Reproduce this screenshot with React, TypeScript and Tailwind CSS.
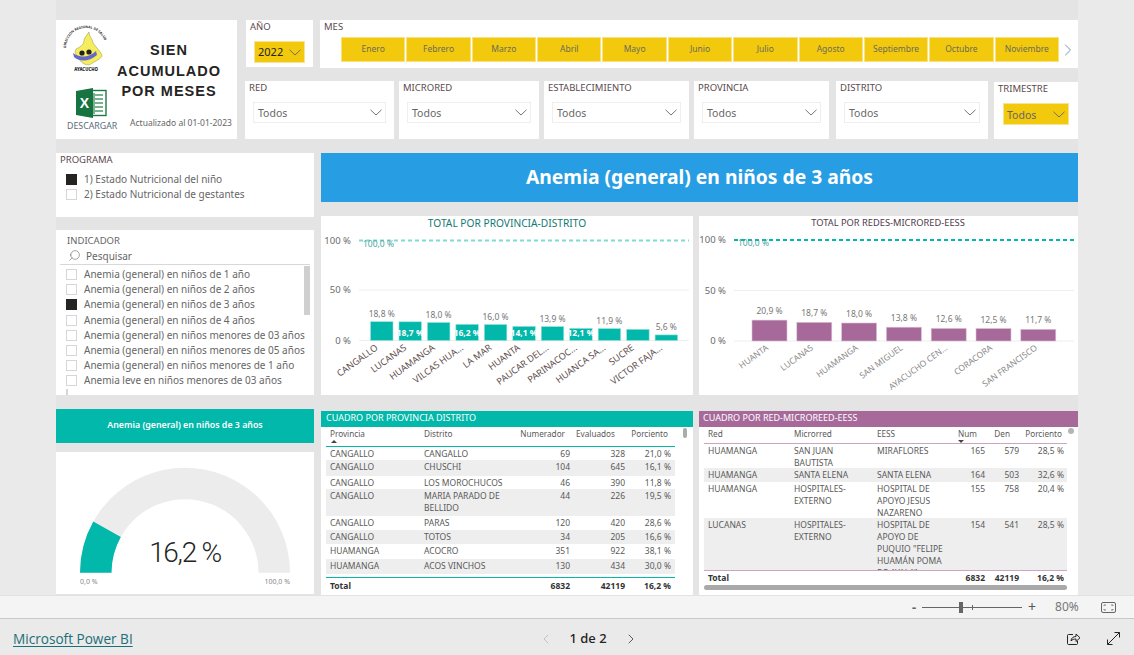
import { ChevronLeft, ChevronRight, Search } from 'lucide-react';

const MONTHS = ['Enero', 'Febrero', 'Marzo', 'Abril', 'Mayo', 'Junio', 'Julio', 'Agosto', 'Septiembre', 'Octubre', 'Noviembre'];

const INDICATORS = [
  'Anemia (general) en niños de 1 año',
  'Anemia (general) en niños de 2 años',
  'Anemia (general) en niños de 3 años',
  'Anemia (general) en niños de 4 años',
  'Anemia (general) en niños menores de 03 años',
  'Anemia (general) en niños menores de 05 años',
  'Anemia (general) en niños menores de 1 año',
  'Anemia leve en niños menores de 03 años',
];

const PROVINCE_BARS = [
  { name: 'CANGALLO', value: 18.8, label: '18,8 %', inside: false },
  { name: 'LUCANAS', value: 18.7, label: '18,7 %', inside: true },
  { name: 'HUAMANGA', value: 18.0, label: '18,0 %', inside: false },
  { name: 'VILCAS HUA...', value: 16.2, label: '16,2 %', inside: true },
  { name: 'LA MAR', value: 16.0, label: '16,0 %', inside: false },
  { name: 'HUANTA', value: 14.1, label: '14,1 %', inside: true },
  { name: 'PAUCAR DEL...', value: 13.9, label: '13,9 %', inside: false },
  { name: 'PARINACOC...', value: 12.1, label: '12,1 %', inside: true },
  { name: 'HUANCA SA...', value: 11.9, label: '11,9 %', inside: false },
  { name: 'SUCRE', value: 11.2, label: '', inside: false },
  { name: 'VICTOR FAJA...', value: 5.6, label: '5,6 %', inside: false },
];

const RED_BARS = [
  { name: 'HUANTA', value: 20.9, label: '20,9 %' },
  { name: 'LUCANAS', value: 18.7, label: '18,7 %' },
  { name: 'HUAMANGA', value: 18.0, label: '18,0 %' },
  { name: 'SAN MIGUEL', value: 13.8, label: '13,8 %' },
  { name: 'AYACUCHO CEN...', value: 12.6, label: '12,6 %' },
  { name: 'CORACORA', value: 12.5, label: '12,5 %' },
  { name: 'SAN FRANCISCO', value: 11.7, label: '11,7 %' },
];

const PROVINCE_ROWS = [
  { h: 'h-[13px]', p: 'CANGALLO', d: 'CANGALLO', n: '69', e: '328', r: '21,0 %' },
  { h: 'h-[16px]', p: 'CANGALLO', d: 'CHUSCHI', n: '104', e: '645', r: '16,1 %' },
  { h: 'h-[13px]', p: 'CANGALLO', d: 'LOS MOROCHUCOS', n: '46', e: '390', r: '11,8 %' },
  { h: 'h-[27px]', p: 'CANGALLO', d: 'MARIA PARADO DE BELLIDO', n: '44', e: '226', r: '19,5 %' },
  { h: 'h-[14px]', p: 'CANGALLO', d: 'PARAS', n: '120', e: '420', r: '28,6 %' },
  { h: 'h-[14px]', p: 'CANGALLO', d: 'TOTOS', n: '34', e: '205', r: '16,6 %' },
  { h: 'h-[15px]', p: 'HUAMANGA', d: 'ACOCRO', n: '351', e: '922', r: '38,1 %' },
  { h: 'h-[15px]', p: 'HUAMANGA', d: 'ACOS VINCHOS', n: '130', e: '434', r: '30,0 %' },
];

const RED_ROWS = [
  { h: 'h-[24px]', r: 'HUAMANGA', m: 'SAN JUAN BAUTISTA', s: 'MIRAFLORES', n: '165', d: '579', p: '28,5 %' },
  { h: 'h-[14px]', r: 'HUAMANGA', m: 'SANTA ELENA', s: 'SANTA ELENA', n: '164', d: '503', p: '32,6 %' },
  { h: 'h-[36px]', r: 'HUAMANGA', m: 'HOSPITALES-EXTERNO', s: 'HOSPITAL DE APOYO JESUS NAZARENO', n: '155', d: '758', p: '20,4 %' },
  { h: 'h-[52px]', r: 'LUCANAS', m: 'HOSPITALES-EXTERNO', s: 'HOSPITAL DE APOYO DE PUQUIO "FELIPE HUAMÁN POMA DE AYALA"', n: '154', d: '541', p: '28,5 %' },
];

function Chevron({ className }: { className?: string }) {
  return (
    <svg width="12" height="7" viewBox="0 0 12 7" className={className} fill="none" stroke="#666" strokeWidth="0.9">
      <polyline points="0.5,0.8 6,6 11.5,0.8" />
    </svg>
  );
}

function DropSlicer({ label, className }: { label: string; className: string }) {
  return (
    <div className={`bg-white h-[58px] px-[4px] ${className}`}>
      <div className="h-[21px] pt-[1px] text-[9.5px] leading-[12px] text-[#5b4a4f]">{label}</div>
      <div className="mx-[4px] h-[21px] border border-[#eeeeee] flex items-center justify-between pl-[4px] pr-[3px] text-[10.5px] text-[#666]">
        <span className="pt-[3px]">Todos</span>
        <Chevron />
      </div>
    </div>
  );
}

function CheckBox({ checked }: { checked?: boolean }) {
  return <span className={`w-[11px] h-[11px] shrink-0 border ${checked ? 'bg-[#252423] border-[#252423]' : 'border-[#d6d6d6] bg-white'}`} />;
}

function Logo() {
  return (
    <svg width="44" height="48" viewBox="0 0 44 48" className="block overflow-visible">
      <defs>
        <path id="arc" d="M1 21 A20 20 0 0 1 41 21" />
      </defs>
      <text fontSize="3.4" fontWeight="700" fill="#2f2f2f">
        <textPath href="#arc">DIRECCION REGIONAL DE SALUD</textPath>
      </text>
      <path d="M24 5 C24 10 28 12 28 16 C31 20 35 24 37 28 C37 32 30 34 26 37 C22 39 17 37 14 32 C11 28 9 25 11 22 C15 20 19 18 19 13 C20 10 22 8 24 5 Z" fill="#f6ed5e" stroke="#77773a" strokeWidth="0.4" />
      <path d="M8 26 C14 31 24 31 31 24 L32 28 C24 35 14 35 9 30 Z" fill="#6468c8" />
      <circle cx="17" cy="26" r="2.6" fill="#222" />
      <circle cx="24" cy="25" r="2.6" fill="#222" />
      <text x="21" y="43.500" textAnchor="middle" fontSize="4.3" fontWeight="800" fill="#222">AYACUCHO</text>
    </svg>
  );
}

function ExcelIcon() {
  return (
    <svg width="31" height="30" viewBox="0 0 31 30" className="block">
      <rect x="10" y="2.5" width="20" height="25" fill="#fff" stroke="#1d7a45" strokeWidth="1.4" />
      <path d="M19 7h8M19 11h8M19 15h8M19 19h8M19 23h8M18 5v21" stroke="#4c9a6c" strokeWidth="1.5" fill="none" />
      <path d="M0 3 L17 0 V30 L0 27 Z" fill="#17733f" />
      <text x="8.5" y="20" textAnchor="middle" fontSize="14" fontWeight="700" fill="#fff" fontFamily="Liberation Sans, sans-serif">X</text>
    </svg>
  );
}

function ChartAxis({ x1, x2, y100, y50, y0, labelX, dash, dashWidth, refX }: { x1: number; x2: number; y100: number; y50: number; y0: number; labelX: number; dash: string; dashWidth: number; refX: number }) {
  return (
    <g fontSize="9.5" fill="#6b6b6b">
      <text x={labelX} y={y100 + 3} textAnchor="end">100 %</text>
      <text x={labelX} y={y50 + 3} textAnchor="end">50 %</text>
      <text x={labelX} y={y0 + 3} textAnchor="end">0 %</text>
      <line x1={x1} x2={x2} y1={y50} y2={y50} stroke="#eeeeee" />
      <line x1={x1} x2={x2} y1={y0} y2={y0} stroke="#eeeeee" />
      <line x1={x1} x2={x2} y1={y100} y2={y100} stroke={dash} strokeWidth={dashWidth} strokeDasharray="4 3" />
      <text x={refX} y={y100 + 6} fontSize="8.5" fill="#4aa79f">100,0 %</text>
    </g>
  );
}

function ProvinceChart() {
  const base = 340.5;
  return (
    <svg viewBox="321 216 372 179" className="block w-full h-full">
      <text x="507" y="227" textAnchor="middle" fontSize="10.2" fill="#117a74">TOTAL POR PROVINCIA-DISTRITO</text>
      <ChartAxis x1={359} x2={689} y100={240.5} y50={290} y0={base} labelX={351} dash="#7fdccf" dashWidth={2} refX={363} />
      {PROVINCE_BARS.map((b, i) => {
        const x = 370.5 + i * 28.46;
        const top = base - b.value;
        return (
          <g key={b.name}>
            <rect x={x} y={top} width="22.5" height={b.value} fill="#01b8aa" stroke="#99e3dd" strokeWidth="0.6" />
            {b.label && !b.inside && <text x={x + 11.2} y={top - 4.5} textAnchor="middle" fontSize="8.5" fill="#777">{b.label}</text>}
            {b.inside && <text x={x + 11.2} y="336" textAnchor="middle" fontSize="8.5" fontWeight="700" fill="#fff">{b.label}</text>}
            <text transform={`translate(${x + 8} 349) rotate(-36)`} textAnchor="end" fontSize="9.2" fill="#5f4f4f">{b.name}</text>
          </g>
        );
      })}
    </svg>
  );
}

function RedChart() {
  const base = 341;
  return (
    <svg viewBox="699 216 379 179" className="block w-full h-full">
      <text x="888" y="226" textAnchor="middle" fontSize="9.3" fill="#4f3a4c">TOTAL POR REDES-MICRORED-EESS</text>
      <ChartAxis x1={734} x2={1074} y100={240} y50={290.5} y0={base} labelX={726} dash="#01b8aa" dashWidth={2.2} refX={738} />
      {RED_BARS.map((b, i) => {
        const x = 752 + i * 44.8;
        const top = base - b.value;
        return (
          <g key={b.name}>
            <rect x={x} y={top} width="35" height={b.value} fill="#a66999" stroke="#dcc3d6" strokeWidth="0.6" />
            <text x={x + 17.5} y={top - 6} textAnchor="middle" fontSize="8.5" fill="#777">{b.label}</text>
            <text transform={`translate(${x + 17} 349) rotate(-36)`} textAnchor="end" fontSize="8.5" fill="#8a8a8a">{b.name}</text>
          </g>
        );
      })}
    </svg>
  );
}

function Gauge() {
  const cx = 129;
  const cy = 120.7;
  const R = 105;
  const r = 73.5;
  const a = Math.PI * (1 - 0.162);
  const px = (rad: number, ang: number) => `${cx + rad * Math.cos(ang)} ${cy - rad * Math.sin(ang)}`;
  return (
    <svg viewBox="0 0 258 142" className="block w-full h-full">
      <path d={`M${px(R, Math.PI)} A${R} ${R} 0 0 1 ${px(R, 0)} L${px(r, 0)} A${r} ${r} 0 0 0 ${px(r, Math.PI)} Z`} fill="#ececec" />
      <path d={`M${px(R, Math.PI)} A${R} ${R} 0 0 1 ${px(R, a)} L${px(r, a)} A${r} ${r} 0 0 0 ${px(r, Math.PI)} Z`} fill="#01b8aa" />
      <text x={cx} y="110" textAnchor="middle" fontSize="28" fontWeight="300" letterSpacing="-1.300" fill="#252423" fontFamily="Roboto, sans-serif">16,2 %</text>
      <text x="24" y="132" fontSize="7" fill="#888">0,0 %</text>
      <text x="234" y="132" fontSize="7" fill="#888" textAnchor="end">100,0 %</text>
    </svg>
  );
}

function ProvinceTable() {
  const cols = 'grid grid-cols-[94px_96px_54px_55px_46px]';
  return (
    <div className="relative bg-white h-[184px] text-[8.5px] text-[#5a5a5a]">
      <div className="h-[16px] bg-[#01b8aa] text-white text-[9px] leading-[13px] pl-[5px]">CUADRO POR PROVINCIA DISTRITO</div>
      <div className="mx-[5px] w-[349px]">
        <div className={`${cols} h-[20px] border-b border-[#01b8aa] pt-[1px] leading-[12px] text-[8.2px]`}>
          <span className="pl-[4px] relative">Provincia<span className="absolute left-[5px] top-[12px] border-x-[3px] border-x-transparent border-b-[3px] border-b-[#444]" /></span>
          <span className="pl-[4px]">Distrito</span>
          <span className="text-right pr-[5px] whitespace-nowrap">Numerador</span>
          <span className="text-right pr-[10px]">Evaluados</span>
          <span className="text-right pr-[3px]">Porciento</span>
        </div>
        {PROVINCE_ROWS.map((row, i) => (
          <div key={row.d} className={`${cols} ${row.h} leading-[12px] overflow-hidden ${i % 2 ? 'bg-[#eeeeee]' : 'bg-white'}`}>
            <span className="pl-[4px] pt-[1px]">{row.p}</span>
            <span className="pl-[4px] pr-[8px] pt-[1px]">{row.d}</span>
            <span className="text-right pt-[1px]">{row.n}</span>
            <span className="text-right pt-[1px]">{row.e}</span>
            <span className="text-right pt-[1px]">{row.r}</span>
          </div>
        ))}
        <div className={`${cols} mt-[3px] border-t border-[#01b8aa] h-[17px] leading-[16px] font-bold text-[#333]`}>
          <span className="pl-[4px]">Total</span>
          <span />
          <span className="text-right">6832</span>
          <span className="text-right">42119</span>
          <span className="text-right">16,2 %</span>
        </div>
      </div>
      <div className="absolute left-[362px] top-[17px] w-[4px] h-[10px] rounded-full bg-[#ababab]" />
    </div>
  );
}

function RedTable() {
  const cols = 'grid grid-cols-[86px_83px_72px_40px_34px_45px]';
  return (
    <div className="relative bg-white h-[184px] text-[8.5px] text-[#5a5a5a]">
      <div className="h-[16px] bg-[#a66999] text-white text-[9px] leading-[13px] pl-[4px]">CUADRO POR RED-MICROREED-EESS</div>
      <div className="mx-[5px] w-[363px]">
        <div className={`${cols} h-[17px] border-b border-[#c9a6c1] pt-[1px] leading-[12px] text-[8.2px]`}>
          <span className="pl-[4px]">Red</span>
          <span className="pl-[4px]">Microrred</span>
          <span className="pl-[4px]">EESS</span>
          <span className="text-right pr-[8px] relative">Num<span className="absolute left-[13px] top-[12px] border-x-[3px] border-x-transparent border-t-[3px] border-t-[#444]" /></span>
          <span className="text-right pr-[9px]">Den</span>
          <span className="text-right pr-[2px]">Porciento</span>
        </div>
        <div className="h-[126px] overflow-hidden">
          {RED_ROWS.map((row, i) => (
            <div key={row.s} className={`${cols} ${row.h} leading-[12px] overflow-hidden ${i % 2 ? 'bg-[#eeeeee]' : 'bg-white'}`}>
              <span className="pl-[4px] pt-[1px]">{row.r}</span>
              <span className="pl-[4px] pr-[6px] pt-[1px]">{row.m}</span>
              <span className="pl-[4px] pt-[1px]">{row.s}</span>
              <span className="text-right pt-[1px]">{row.n}</span>
              <span className="text-right pt-[1px]">{row.d}</span>
              <span className="text-right pt-[1px]">{row.p}</span>
            </div>
          ))}
        </div>
        <div className={`${cols} border-t border-[#c9a6c1] h-[13px] leading-[13px] font-bold text-[#333]`}>
          <span className="pl-[4px]">Total</span>
          <span />
          <span />
          <span className="text-right">6832</span>
          <span className="text-right">42119</span>
          <span className="text-right">16,2 %</span>
        </div>
        <div className="mt-[2px] h-[5px] rounded-full bg-[#a9a9a9]" />
      </div>
      <div className="absolute left-[369px] top-[17px] w-[6px] h-[6px] rounded-full bg-[#b5b5b5]" />
    </div>
  );
}

export default function App() {
  return (
    <div className="w-[1134px] h-[655px] overflow-hidden flex flex-col bg-[#eaeaea] font-['Noto_Sans',sans-serif]">
      <div className="h-[595px] mx-[56px] bg-[#e4e4e4] pt-[20px] overflow-hidden">
        <div className="flex h-[119px]">
          <div className="w-[181px] bg-white flex pl-[9px]">
            <div className="w-[60px] flex flex-col items-start shrink-0">
              <div className="mt-[7px]"><Logo /></div>
              <div className="ml-[11px] mt-[13px]"><ExcelIcon /></div>
              <div className="ml-[2px] mt-[2px] text-[8.8px] text-[#5b6b7a]">DESCARGAR</div>
            </div>
            <div className="flex-1 flex flex-col items-center">
              <div className="mt-[20px] ml-[-24px] font-['Liberation_Sans',sans-serif] font-bold text-[14.5px] leading-[20.5px] tracking-[1px] text-[#252423] text-center">
                SIEN<br />ACUMULADO<br />POR MESES
              </div>
              <div className="mt-[15px] text-[8.5px] text-[#666] whitespace-nowrap">Actualizado al 01-01-2023</div>
            </div>
          </div>
          <div className="ml-[8px] w-[833px] flex flex-col">
            <div className="flex h-[48px]">
              <div className="ml-[1px] w-[67px] h-[47px] bg-white px-[4px]">
                <div className="h-[21px] text-[9.5px] leading-[14px] text-[#5b4a4f]">AÑO</div>
                <div className="mx-[4px] h-[22px] bg-[#f2c90d] border border-[#f6e39a] flex items-center justify-between pl-[3px] pr-[3px] text-[11px] text-[#252423]">
                  <span>2022</span>
                  <Chevron />
                </div>
              </div>
              <div className="ml-[7px] w-[758px] bg-white relative">
                <div className="pl-[4px] h-[17px] text-[9.5px] leading-[14px] text-[#5b4a4f]">MES</div>
                <div className="ml-[21px] w-[718px] grid grid-cols-11 gap-[1px] h-[25px]">
                  {MONTHS.map(m => (
                    <div key={m} className="bg-[#f2c90d] border border-[#f8e27f] flex items-center justify-center text-[8.5px] text-[#6b6b5a]">{m}</div>
                  ))}
                </div>
                <ChevronRight size={20} strokeWidth={1} className="absolute left-[738px] top-[20px] text-[#5f7d99]" />
              </div>
            </div>
            <div className="flex mt-[13px] h-[58px]">
              <DropSlicer label="RED" className="w-[149px]" />
              <DropSlicer label="MICRORED" className="ml-[5px] w-[140px]" />
              <DropSlicer label="ESTABLECIMIENTO" className="ml-[5px] w-[145px]" />
              <DropSlicer label="PROVINCIA" className="ml-[5px] w-[135px]" />
              <DropSlicer label="DISTRITO" className="ml-[7px] w-[152px]" />
              <div className="ml-[6px] w-[84px] h-[57px] mt-[1px] bg-white px-[4px]">
                <div className="h-[21px] pt-[1px] text-[9.5px] leading-[12px] text-[#5b4a4f]">TRIMESTRE</div>
                <div className="ml-[5px] w-[66px] h-[22px] bg-[#f2c90d] border border-[#f6e39a] flex items-center justify-between pl-[3px] pr-[3px] text-[10.5px] text-[#666]">
                  <span className="pt-[3px]">Todos</span>
                  <Chevron />
                </div>
              </div>
            </div>
          </div>
        </div>

        <div className="flex mt-[14px] h-[243px]">
          <div className="w-[258px] flex flex-col">
            <div className="h-[64px] bg-white pl-[4px] pt-[1px]">
              <div className="text-[9.5px] leading-[12px] text-[#5b4a4f]">PROGRAMA</div>
              <div className="mt-[6px] ml-[6px] flex items-center gap-[7px] h-[15px] text-[10px] text-[#666]"><CheckBox checked />1) Estado Nutricional del niño</div>
              <div className="ml-[6px] flex items-center gap-[7px] h-[15px] text-[10px] text-[#666]"><CheckBox />2) Estado Nutricional de gestantes</div>
            </div>
            <div className="mt-[13px] h-[165px] bg-white relative overflow-hidden">
              <div className="pl-[11px] pt-[5px] text-[9.5px] leading-[12px] text-[#666]">INDICADOR</div>
              <div className="ml-[4px] mr-[4px] h-[18px] border-b border-[#d8d8d8] flex items-center pl-[8px] gap-[5px] text-[10px] text-[#666]">
                <Search size={13} strokeWidth={1} className="-scale-x-100 text-[#555]" />
                <span className="pt-[2px]">Pesquisar</span>
              </div>
              <div className="pl-[10px] pt-[2px]">
                {INDICATORS.map((t, i) => (
                  <div key={t} className="flex items-center gap-[7px] h-[15.2px] text-[10px] text-[#666] whitespace-nowrap">
                    <CheckBox checked={i === 2} />{t}
                  </div>
                ))}
                <CheckBox />
              </div>
              <div className="absolute left-[248px] top-[36px] w-[6px] h-[49px] bg-[#cfcfcf]" />
            </div>
          </div>
          <div className="ml-[7px] w-[757px] flex flex-col">
            <div className="h-[49px] bg-[#279de3] flex items-center justify-center text-white font-bold text-[19.3px]">Anemia (general) en niños de 3 años</div>
            <div className="flex mt-[14px] h-[179px]">
              <div className="w-[372px] bg-white"><ProvinceChart /></div>
              <div className="ml-[6px] w-[379px] bg-white"><RedChart /></div>
            </div>
          </div>
        </div>

        <div className="flex mt-[15px]">
          <div className="w-[258px] -mt-[2px] flex flex-col">
            <div className="h-[34px] bg-[#01b8aa] flex items-center justify-center text-white font-semibold text-[8.8px]">Anemia (general) en niños de 3 años</div>
            <div className="mt-[9px] h-[142px] bg-white"><Gauge /></div>
          </div>
          <div className="ml-[7px] w-[372px]"><ProvinceTable /></div>
          <div className="ml-[6px] w-[379px]"><RedTable /></div>
        </div>
      </div>

      <div className="h-[24px] bg-[#f4f4f4] border-t border-[#e2e2e2] border-b border-b-[#c8c8c8] flex items-center text-[#666] relative">
        <span className="ml-[912px] w-[6px] text-[13px] font-bold leading-none">-</span>
        <div className="ml-[4px] w-[100px] h-[1px] bg-[#666] relative">
          <span className="absolute left-[37px] -top-[5px] w-[4px] h-[11px] bg-[#666]" />
          <span className="absolute left-[50px] -top-[2px] w-[1px] h-[5px] bg-[#666]" />
        </div>
        <span className="ml-[6px] text-[14px] leading-none text-[#555]">+</span>
        <span className="ml-[19px] text-[12px] text-[#777]">80%</span>
        <svg width="15" height="11" viewBox="0 0 15 11" className="ml-[22px]" fill="none" stroke="#666">
          <rect x="0.5" y="0.5" width="14" height="10" rx="1.5" />
          <path d="M3 4V3h2M12 4V3h-2M3 7v1h2M12 7v1h-2" strokeWidth="0.8" />
        </svg>
      </div>

      <div className="flex-1 flex items-center relative pl-[13px] pt-[3px]">
        <a className="text-[13.6px] text-[#1b6f78] underline underline-offset-2 leading-none font-['Open_Sans',sans-serif]">Microsoft Power BI</a>
        <div className="absolute left-[538px] top-[2px] h-full flex items-center">
          <ChevronLeft size={16} strokeWidth={1.3} className="text-[#bdbdbd]" />
          <span className="ml-[15px] text-[13px] font-medium text-[#252423] w-[38px] text-center">1 de 2</span>
          <ChevronRight size={16} strokeWidth={1.3} className="ml-[16px] text-[#444]" />
        </div>
        <div className="ml-auto flex items-center mr-[14px] gap-[26px]">
          <svg width="14" height="14" viewBox="0 0 14 14" fill="none" stroke="#252423" strokeWidth="1">
            <path d="M6 2.5H1.5a1 1 0 0 0-1 1v8a1 1 0 0 0 1 1h8a1 1 0 0 0 1-1V9" />
            <path d="M4 9c0-3 2.500-4.500 5-4.500V2l4 3.800-4 3.700V7C7 7 5.200 7.500 4 9z" />
          </svg>
          <svg width="13" height="13" viewBox="0 0 13 13" fill="none" stroke="#252423" strokeWidth="1">
            <path d="M0.500 12.500L12.500 0.500M7.500 0.500h5v5M0.500 7.500v5h5" />
          </svg>
        </div>
      </div>
    </div>
  );
}
